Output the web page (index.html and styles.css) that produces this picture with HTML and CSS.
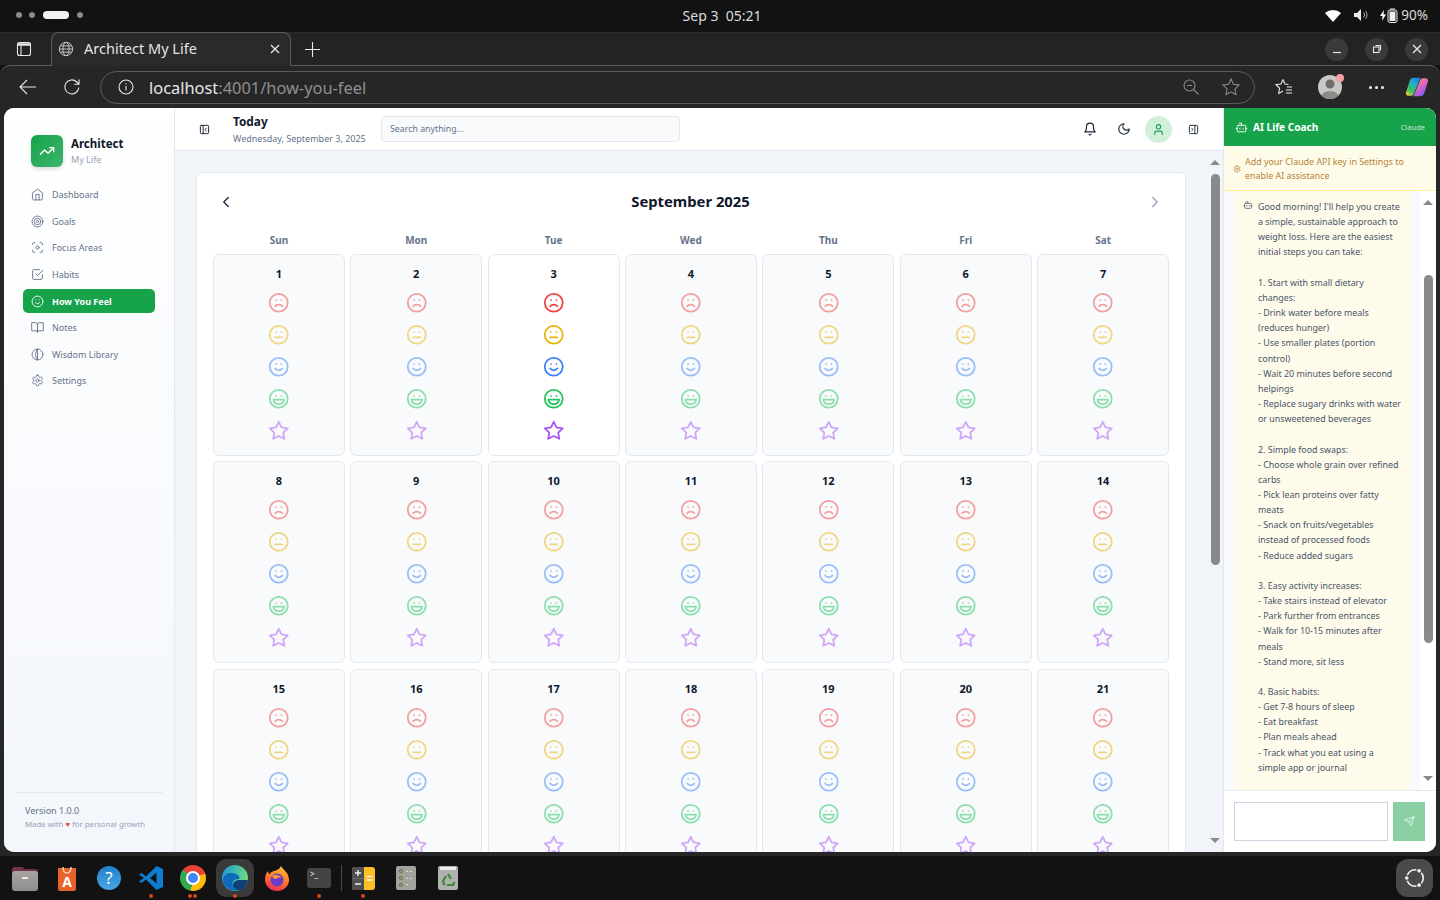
FILE: index.html
```html
<!DOCTYPE html>
<html lang="en">
<head>
  <meta charset="UTF-8" />
  <title>Architect My Life</title>
  <link rel="stylesheet" href="styles.css">
</head>
<body>

  <!-- icon sprite -->
  <svg class="sprite" xmlns="http://www.w3.org/2000/svg">
    <symbol id="i-home" viewBox="0 0 24 24"><path d="m3 9 9-7 9 7v11a2 2 0 0 1-2 2H5a2 2 0 0 1-2-2z"/><path d="M9 22V12h6v10"/></symbol>
    <symbol id="i-target" viewBox="0 0 24 24"><circle cx="12" cy="12" r="10"/><circle cx="12" cy="12" r="6"/><circle cx="12" cy="12" r="2"/></symbol>
    <symbol id="i-focus" viewBox="0 0 24 24"><circle cx="12" cy="12" r="3"/><path d="M3 7V5a2 2 0 0 1 2-2h2"/><path d="M17 3h2a2 2 0 0 1 2 2v2"/><path d="M21 17v2a2 2 0 0 1-2 2h-2"/><path d="M7 21H5a2 2 0 0 1-2-2v-2"/></symbol>
    <symbol id="i-check" viewBox="0 0 24 24"><path d="m9 11 3 3L22 4"/><path d="M21 12v7a2 2 0 0 1-2 2H5a2 2 0 0 1-2-2V5a2 2 0 0 1 2-2h11"/></symbol>
    <symbol id="i-book" viewBox="0 0 24 24"><path d="M2 3h6a4 4 0 0 1 4 4v14a3 3 0 0 0-3-3H2z"/><path d="M22 3h-6a4 4 0 0 0-4 4v14a3 3 0 0 1 3-3h7z"/></symbol>
    <symbol id="i-wisdom" viewBox="0 0 24 24"><circle cx="12" cy="12" r="10"/><path d="M12 2c-5 4-5 16 0 20"/><path d="M12 2v20"/></symbol>
    <symbol id="i-gear" viewBox="0 0 24 24"><path d="M12.22 2h-.44a2 2 0 0 0-2 2v.18a2 2 0 0 1-1 1.73l-.43.25a2 2 0 0 1-2 0l-.15-.08a2 2 0 0 0-2.73.73l-.22.38a2 2 0 0 0 .73 2.73l.15.1a2 2 0 0 1 1 1.72v.51a2 2 0 0 1-1 1.74l-.15.09a2 2 0 0 0-.73 2.73l.22.38a2 2 0 0 0 2.73.73l.15-.08a2 2 0 0 1 2 0l.43.25a2 2 0 0 1 1 1.73V20a2 2 0 0 0 2 2h.44a2 2 0 0 0 2-2v-.18a2 2 0 0 1 1-1.73l.43-.25a2 2 0 0 1 2 0l.15.08a2 2 0 0 0 2.73-.73l.22-.39a2 2 0 0 0-.73-2.73l-.15-.08a2 2 0 0 1-1-1.74v-.5a2 2 0 0 1 1-1.74l.15-.09a2 2 0 0 0 .73-2.73l-.22-.38a2 2 0 0 0-2.73-.73l-.15.08a2 2 0 0 1-2 0l-.43-.25a2 2 0 0 1-1-1.73V4a2 2 0 0 0-2-2z"/><circle cx="12" cy="12" r="3"/></symbol>
    <symbol id="i-trend" viewBox="0 0 24 24"><path d="M22 7l-8.500 8.500-5-5L2 17"/><path d="M16 7h6v6"/></symbol>
    <symbol id="i-bell" viewBox="0 0 24 24"><path d="M6 8a6 6 0 0 1 12 0c0 7 3 9 3 9H3s3-2 3-9"/><path d="M10.300 21a1.940 1.940 0 0 0 3.400 0"/></symbol>
    <symbol id="i-moon" viewBox="0 0 24 24"><path d="M12 3a6 6 0 0 0 9 9 9 9 0 1 1-9-9Z"/></symbol>
    <symbol id="i-user" viewBox="0 0 24 24"><path d="M19 21v-2a4 4 0 0 0-4-4H9a4 4 0 0 0-4 4v2"/><circle cx="12" cy="7" r="4"/></symbol>
    <symbol id="i-panel-l" viewBox="0 0 24 24"><rect x="3" y="3" width="18" height="18" rx="2"/><path d="M9 3v18"/><path d="m16 15-3-3 3-3"/></symbol>
    <symbol id="i-panel-r" viewBox="0 0 24 24"><rect x="3" y="3" width="18" height="18" rx="2"/><path d="M15 3v18"/><path d="m8 9 3 3-3 3"/></symbol>
    <symbol id="i-bot" viewBox="0 0 24 24"><path d="M12 8V4H8"/><rect x="4" y="8" width="16" height="12" rx="2"/><path d="M2 14h2"/><path d="M20 14h2"/><path d="M15 13v2"/><path d="M9 13v2"/></symbol>
    <symbol id="i-send" viewBox="0 0 24 24"><path d="m22 2-7 20-4-9-9-4Z"/><path d="M22 2 11 13"/></symbol>
    <symbol id="i-left" viewBox="0 0 24 24"><path d="m15 18-6-6 6-6"/></symbol>
    <symbol id="i-right" viewBox="0 0 24 24"><path d="m9 18 6-6-6-6"/></symbol>
    <symbol id="i-frown" viewBox="0 0 24 24"><circle cx="12" cy="12" r="10"/><path d="M16 16s-1.500-2-4-2-4 2-4 2"/><path d="M9 9h.01"/><path d="M15 9h.01"/></symbol>
    <symbol id="i-meh" viewBox="0 0 24 24"><circle cx="12" cy="12" r="10"/><path d="M8 15h8"/><path d="M9 9h.01"/><path d="M15 9h.01"/></symbol>
    <symbol id="i-smile" viewBox="0 0 24 24"><circle cx="12" cy="12" r="10"/><path d="M8 14s1.500 2 4 2 4-2 4-2"/><path d="M9 9h.01"/><path d="M15 9h.01"/></symbol>
    <symbol id="i-laugh" viewBox="0 0 24 24"><circle cx="12" cy="12" r="10"/><path d="M18 13a6 6 0 0 1-6 5 6 6 0 0 1-6-5h12Z"/><path d="M9 9h.01"/><path d="M15 9h.01"/></symbol>
    <symbol id="i-star" viewBox="0 0 24 24"><path d="M12 2l3.090 6.260L22 9.270l-5 4.870 1.180 6.880L12 17.770l-6.180 3.250L7 14.140 2 9.270l6.910-1.010L12 2z"/></symbol>
  </svg>

  <!-- Desktop top bar -->
  <div class="topbar">
    <div class="workspaces"><i></i><i></i><b></b><i></i></div>
    <div class="clock">Sep 3&nbsp;&nbsp;05:21</div>
    <div class="tray">
      <svg width="16" height="13" viewBox="0 0 16 13"><path d="M0 4a12 12 0 0 1 16 0L8 13z" fill="#fff"/></svg>
      <svg class="tray-sound" width="16" height="14" viewBox="0 0 16 14"><path d="M0 5h3l4-4v12l-4-4H0z" fill="#eee"/><path d="M9.500 4.500a3.500 3.500 0 0 1 0 5M11.500 3a6 6 0 0 1 0 8" fill="none" stroke="#aaa"/></svg>
      <svg class="tray-batt" width="20" height="15" viewBox="0 0 20 15"><path d="M4 2 0 8h2.500L2 13l4-6.500H3.500z" fill="#fff"/><rect x="8" y="2" width="9" height="12.500" rx="2" fill="none" stroke="#eee"/><rect x="9.500" y="3.500" width="6" height="9.500" fill="#eee"/><path d="M10 1h5" stroke="#eee"/></svg>
      <span>90%</span>
    </div>
  </div>

  <!-- Browser chrome -->
  <div class="tabstrip">
    <svg class="chrome-ico tabs-ico" width="16" height="16" viewBox="0 0 16 16"><rect x="1.500" y="1.500" width="13" height="13" rx="2"/><path d="M1.500 3.500h13" stroke-width="2.500"/><path d="M5 4.500v10"/></svg>
    <div class="tab">
      <svg class="chrome-ico globe" width="16" height="16" viewBox="0 0 18 18"><circle cx="9" cy="9" r="7.500"/><ellipse cx="9" cy="9" rx="3.500" ry="7.500"/><path d="M1.500 9h15M2.500 5.500h13M2.500 12.500h13"/></svg>
      <span class="tab-title">Architect My Life</span>
      <svg class="chrome-ico" width="10" height="10" viewBox="0 0 10 10"><path d="m1 1 8 8M9 1 1 9" stroke-width="1.300"/></svg>
    </div>
    <svg class="chrome-ico new-tab" width="15" height="15" viewBox="0 0 15 15"><path d="M7.500 0v15M0 7.500h15"/></svg>
    <div class="win-btns">
      <span><svg class="chrome-ico" width="10" height="10" viewBox="0 0 10 10"><path d="M1 8.500h8" stroke-width="1.200"/></svg></span>
      <span><svg class="chrome-ico" width="10" height="10" viewBox="0 0 10 10"><rect x="1.500" y="3" width="5.500" height="5.500"/><path d="M3.500 1.500h5v5"/></svg></span>
      <span><svg class="chrome-ico" width="10" height="10" viewBox="0 0 10 10"><path d="m1 1 8 8M9 1 1 9" stroke-width="1.300"/></svg></span>
    </div>
  </div>
  <div class="toolbar">
    <svg class="chrome-ico tool-back" width="18" height="16" viewBox="0 0 18 16"><path d="M17 8H1M8 1 1 8l7 7"/></svg>
    <svg class="chrome-ico tool-reload" width="18" height="18" viewBox="0 0 18 18"><path d="M15.800 9.500a7 7 0 1 1-2-5.500L16 6.200M16 1.500v4.700h-4.700"/></svg>
    <div class="address">
      <svg class="chrome-ico" width="16" height="16" viewBox="0 0 16 16"><circle cx="8" cy="8" r="7"/><path d="M8 7v4.500M8 4.300v1.200"/></svg>
      <span class="url"><em>localhost</em>:4001/how-you-feel</span>
      <svg class="chrome-ico dim zoom-out" width="16" height="16" viewBox="0 0 16 16"><circle cx="6.500" cy="6.500" r="5.500"/><path d="M4 6.500h5M10.500 10.500l5 5"/></svg>
      <svg class="chrome-ico dim" width="18" height="18" viewBox="0 0 18 18"><path d="m9 1 2.400 5.300 5.600.7-4.100 3.900 1.100 5.700L9 14l-5 2.600 1.100-5.700L1 7l5.600-.7z"/></svg>
    </div>
    <svg class="chrome-ico tool-fav" width="18" height="18" viewBox="0 0 18 18"><path d="M8 1.500 6 6l-5 .7 3.600 3.600-.9 5.200L8 13M8 1.500 10 6l3.500.5M12 9h5M11 12h6M11 15h6"/></svg>
    <div class="profile">
      <svg width="24" height="24" viewBox="0 0 24 24"><circle cx="12" cy="12" r="12" fill="#c9c7c4"/><circle cx="12" cy="9" r="4.500" fill="#6f6e6c"/><path d="M3.500 20.500a9 6.500 0 0 1 17 0 12 12 0 0 1-17 0z" fill="#8c8b89"/></svg>
      <i class="profile-dot"></i>
    </div>
    <div class="more"><i></i><i></i><i></i></div>
    <svg class="copilot" width="24" height="22" viewBox="0 0 24 24" preserveAspectRatio="none">
      <defs>
        <linearGradient id="cp1" x1="0.800" y1="0" x2="0.100" y2="1"><stop offset="0" stop-color="#1f7fe8"/><stop offset=".35" stop-color="#22b0c8"/><stop offset=".7" stop-color="#3fc05a"/><stop offset="1" stop-color="#f0cf3a"/></linearGradient>
        <linearGradient id="cp2" x1="0.900" y1="1" x2="0.200" y2="0"><stop offset="0" stop-color="#f2a65a"/><stop offset=".35" stop-color="#ee6fa0"/><stop offset=".75" stop-color="#a85ce8"/><stop offset="1" stop-color="#3a78f0"/></linearGradient>
      </defs>
      <path d="M8.500 2h7L9 19c-.5 1.500-1.500 2.500-3 2.500H3.500C1.500 21.500.5 20 1 18L4.500 6c.7-2.500 1.800-4 4-4z" fill="url(#cp1)"/>
      <path d="M8.500 2h7L9 19c-.5 1.500-1.500 2.500-3 2.500H3.500C1.500 21.500.5 20 1 18L4.500 6c.7-2.500 1.800-4 4-4z" fill="url(#cp2)" transform="rotate(180 12 12)"/>
    </svg>
  </div>

  <!-- App -->
  <div class="window-wrap">
    <div class="app">

      <aside class="sidebar">
        <div class="brand">
          <div class="brand-logo"><svg class="ico"><use href="#i-trend"/></svg></div>
          <div>
            <div class="brand-name">Architect</div>
            <div class="brand-sub">My Life</div>
          </div>
        </div>
        <nav class="nav">
          <a class="nav-item"><svg class="ico"><use href="#i-home"/></svg>Dashboard</a>
          <a class="nav-item"><svg class="ico"><use href="#i-target"/></svg>Goals</a>
          <a class="nav-item"><svg class="ico"><use href="#i-focus"/></svg>Focus Areas</a>
          <a class="nav-item"><svg class="ico"><use href="#i-check"/></svg>Habits</a>
          <a class="nav-item active"><svg class="ico"><use href="#i-smile"/></svg>How You Feel</a>
          <a class="nav-item"><svg class="ico"><use href="#i-book"/></svg>Notes</a>
          <a class="nav-item"><svg class="ico"><use href="#i-wisdom"/></svg>Wisdom Library</a>
          <a class="nav-item"><svg class="ico"><use href="#i-gear"/></svg>Settings</a>
        </nav>
        <div class="side-foot">
          <div class="version">Version 1.0.0</div>
          <div class="made">Made with <span class="heart">♥</span> for personal growth</div>
        </div>
      </aside>

      <div class="main">
        <header class="header">
          <svg class="ico head-toggle"><use href="#i-panel-l"/></svg>
          <div class="today">
            <div class="today-title">Today</div>
            <div class="today-date">Wednesday, September 3, 2025</div>
          </div>
          <div class="search">Search anything...</div>
          <div class="head-actions">
            <svg class="ico head-ico"><use href="#i-bell"/></svg>
            <svg class="ico head-ico moon-ico"><use href="#i-moon"/></svg>
            <div class="avatar"><svg class="ico head-ico"><use href="#i-user"/></svg></div>
            <svg class="ico head-ico panel-ico"><use href="#i-panel-r"/></svg>
          </div>
        </header>

        <div class="content">
          <div class="content-scroll">
            <section class="card">
              <div class="month-head">
                <svg class="ico chev"><use href="#i-left"/></svg>
                <h2>September 2025</h2>
                <svg class="ico chev chev-next"><use href="#i-right"/></svg>
              </div>
              <div class="weekdays">
                <div>Sun</div><div>Mon</div><div>Tue</div><div>Wed</div><div>Thu</div><div>Fri</div><div>Sat</div>
              </div>
              <div class="days">
                <div class="day"><span>1</span><svg class="f red"><use href="#i-frown"/></svg><svg class="f amber"><use href="#i-meh"/></svg><svg class="f blue"><use href="#i-smile"/></svg><svg class="f green"><use href="#i-laugh"/></svg><svg class="f purple"><use href="#i-star"/></svg></div>
                <div class="day"><span>2</span><svg class="f red"><use href="#i-frown"/></svg><svg class="f amber"><use href="#i-meh"/></svg><svg class="f blue"><use href="#i-smile"/></svg><svg class="f green"><use href="#i-laugh"/></svg><svg class="f purple"><use href="#i-star"/></svg></div>
                <div class="day is-today"><span>3</span><svg class="f red"><use href="#i-frown"/></svg><svg class="f amber"><use href="#i-meh"/></svg><svg class="f blue"><use href="#i-smile"/></svg><svg class="f green"><use href="#i-laugh"/></svg><svg class="f purple"><use href="#i-star"/></svg></div>
                <div class="day"><span>4</span><svg class="f red"><use href="#i-frown"/></svg><svg class="f amber"><use href="#i-meh"/></svg><svg class="f blue"><use href="#i-smile"/></svg><svg class="f green"><use href="#i-laugh"/></svg><svg class="f purple"><use href="#i-star"/></svg></div>
                <div class="day"><span>5</span><svg class="f red"><use href="#i-frown"/></svg><svg class="f amber"><use href="#i-meh"/></svg><svg class="f blue"><use href="#i-smile"/></svg><svg class="f green"><use href="#i-laugh"/></svg><svg class="f purple"><use href="#i-star"/></svg></div>
                <div class="day"><span>6</span><svg class="f red"><use href="#i-frown"/></svg><svg class="f amber"><use href="#i-meh"/></svg><svg class="f blue"><use href="#i-smile"/></svg><svg class="f green"><use href="#i-laugh"/></svg><svg class="f purple"><use href="#i-star"/></svg></div>
                <div class="day"><span>7</span><svg class="f red"><use href="#i-frown"/></svg><svg class="f amber"><use href="#i-meh"/></svg><svg class="f blue"><use href="#i-smile"/></svg><svg class="f green"><use href="#i-laugh"/></svg><svg class="f purple"><use href="#i-star"/></svg></div>
                <div class="day"><span>8</span><svg class="f red"><use href="#i-frown"/></svg><svg class="f amber"><use href="#i-meh"/></svg><svg class="f blue"><use href="#i-smile"/></svg><svg class="f green"><use href="#i-laugh"/></svg><svg class="f purple"><use href="#i-star"/></svg></div>
                <div class="day"><span>9</span><svg class="f red"><use href="#i-frown"/></svg><svg class="f amber"><use href="#i-meh"/></svg><svg class="f blue"><use href="#i-smile"/></svg><svg class="f green"><use href="#i-laugh"/></svg><svg class="f purple"><use href="#i-star"/></svg></div>
                <div class="day"><span>10</span><svg class="f red"><use href="#i-frown"/></svg><svg class="f amber"><use href="#i-meh"/></svg><svg class="f blue"><use href="#i-smile"/></svg><svg class="f green"><use href="#i-laugh"/></svg><svg class="f purple"><use href="#i-star"/></svg></div>
                <div class="day"><span>11</span><svg class="f red"><use href="#i-frown"/></svg><svg class="f amber"><use href="#i-meh"/></svg><svg class="f blue"><use href="#i-smile"/></svg><svg class="f green"><use href="#i-laugh"/></svg><svg class="f purple"><use href="#i-star"/></svg></div>
                <div class="day"><span>12</span><svg class="f red"><use href="#i-frown"/></svg><svg class="f amber"><use href="#i-meh"/></svg><svg class="f blue"><use href="#i-smile"/></svg><svg class="f green"><use href="#i-laugh"/></svg><svg class="f purple"><use href="#i-star"/></svg></div>
                <div class="day"><span>13</span><svg class="f red"><use href="#i-frown"/></svg><svg class="f amber"><use href="#i-meh"/></svg><svg class="f blue"><use href="#i-smile"/></svg><svg class="f green"><use href="#i-laugh"/></svg><svg class="f purple"><use href="#i-star"/></svg></div>
                <div class="day"><span>14</span><svg class="f red"><use href="#i-frown"/></svg><svg class="f amber"><use href="#i-meh"/></svg><svg class="f blue"><use href="#i-smile"/></svg><svg class="f green"><use href="#i-laugh"/></svg><svg class="f purple"><use href="#i-star"/></svg></div>
                <div class="day"><span>15</span><svg class="f red"><use href="#i-frown"/></svg><svg class="f amber"><use href="#i-meh"/></svg><svg class="f blue"><use href="#i-smile"/></svg><svg class="f green"><use href="#i-laugh"/></svg><svg class="f purple"><use href="#i-star"/></svg></div>
                <div class="day"><span>16</span><svg class="f red"><use href="#i-frown"/></svg><svg class="f amber"><use href="#i-meh"/></svg><svg class="f blue"><use href="#i-smile"/></svg><svg class="f green"><use href="#i-laugh"/></svg><svg class="f purple"><use href="#i-star"/></svg></div>
                <div class="day"><span>17</span><svg class="f red"><use href="#i-frown"/></svg><svg class="f amber"><use href="#i-meh"/></svg><svg class="f blue"><use href="#i-smile"/></svg><svg class="f green"><use href="#i-laugh"/></svg><svg class="f purple"><use href="#i-star"/></svg></div>
                <div class="day"><span>18</span><svg class="f red"><use href="#i-frown"/></svg><svg class="f amber"><use href="#i-meh"/></svg><svg class="f blue"><use href="#i-smile"/></svg><svg class="f green"><use href="#i-laugh"/></svg><svg class="f purple"><use href="#i-star"/></svg></div>
                <div class="day"><span>19</span><svg class="f red"><use href="#i-frown"/></svg><svg class="f amber"><use href="#i-meh"/></svg><svg class="f blue"><use href="#i-smile"/></svg><svg class="f green"><use href="#i-laugh"/></svg><svg class="f purple"><use href="#i-star"/></svg></div>
                <div class="day"><span>20</span><svg class="f red"><use href="#i-frown"/></svg><svg class="f amber"><use href="#i-meh"/></svg><svg class="f blue"><use href="#i-smile"/></svg><svg class="f green"><use href="#i-laugh"/></svg><svg class="f purple"><use href="#i-star"/></svg></div>
                <div class="day"><span>21</span><svg class="f red"><use href="#i-frown"/></svg><svg class="f amber"><use href="#i-meh"/></svg><svg class="f blue"><use href="#i-smile"/></svg><svg class="f green"><use href="#i-laugh"/></svg><svg class="f purple"><use href="#i-star"/></svg></div>
              </div>
            </section>
          </div>
          <div class="scrollbar scrollbar-main">
            <i class="arrow-up"></i>
            <div class="track"><b class="thumb"></b></div>
            <i class="arrow-down"></i>
          </div>
        </div>
      </div>

      <aside class="coach">
        <div class="coach-head">
          <svg class="ico coach-bot"><use href="#i-bot"/></svg>
          <span class="coach-title">AI Life Coach</span>
          <span class="coach-tag">Claude</span>
        </div>
        <div class="coach-warn">
          <svg class="ico warn-ico"><use href="#i-gear"/></svg>
          <span>Add your Claude API key in Settings to enable AI assistance</span>
        </div>
        <div class="coach-body">
          <div class="messages">
            <div class="bubble">
              <svg class="ico bubble-bot"><use href="#i-bot"/></svg>
              <p class="bubble-text">Good morning! I'll help you create
a simple, sustainable approach to
weight loss. Here are the easiest
initial steps you can take:

1. Start with small dietary
changes:
- Drink water before meals
(reduces hunger)
- Use smaller plates (portion
control)
- Wait 20 minutes before second
helpings
- Replace sugary drinks with water
or unsweetened beverages

2. Simple food swaps:
- Choose whole grain over refined
carbs
- Pick lean proteins over fatty
meats
- Snack on fruits/vegetables
instead of processed foods
- Reduce added sugars

3. Easy activity increases:
- Take stairs instead of elevator
- Park further from entrances
- Walk for 10-15 minutes after
meals
- Stand more, sit less

4. Basic habits:
- Get 7-8 hours of sleep
- Eat breakfast
- Plan meals ahead
- Track what you eat using a
simple app or journal</p>
            </div>
          </div>
          <div class="scrollbar scrollbar-chat">
            <i class="arrow-up"></i>
            <div class="track"><b class="thumb"></b></div>
            <i class="arrow-down"></i>
          </div>
        </div>
        <div class="coach-input">
          <div class="chat-box"></div>
          <div class="send"><svg class="ico"><use href="#i-send"/></svg></div>
        </div>
      </aside>
    </div>
  </div>

  <!-- Dock -->
  <div class="dock">
    <div class="dock-item">
      <svg width="26" height="25" viewBox="0 0 26 25"><defs><linearGradient id="fold" x1="0" y1="0" x2="0" y2="1"><stop offset="0" stop-color="#a8a2a0"/><stop offset="1" stop-color="#8e8e8e"/></linearGradient></defs><path d="M0 4a3 3 0 0 1 3-3h7l3 2h10a3 3 0 0 1 3 3v3H0z" fill="#77304a"/><rect y="5" width="26" height="20" rx="3" fill="url(#fold)"/><rect x="10" y="11" width="6" height="2" fill="#eee"/></svg>
    </div>
    <div class="dock-item">
      <svg width="20" height="25" viewBox="0 0 20 25"><path d="M1 2h18v21a2 2 0 0 1-2 2H3a2 2 0 0 1-2-2z" fill="#e8622a"/><path d="M6 1c0 4 1.500 6 4 6s4-2 4-6" fill="none" stroke="#f9d3b8" stroke-width="1.500"/><text x="10" y="21" class="dock-letter">A</text></svg>
    </div>
    <div class="dock-item">
      <svg width="24" height="24" viewBox="0 0 24 24"><defs><linearGradient id="help" x1="0" y1="0" x2="0" y2="1"><stop offset="0" stop-color="#1f7fc8"/><stop offset="1" stop-color="#4aa6e6"/></linearGradient></defs><circle cx="12" cy="12" r="12" fill="url(#help)"/><text x="12" y="18" class="dock-help">?</text></svg>
    </div>
    <div class="dock-item is-running">
      <svg width="24" height="24" viewBox="0 0 24 24"><path d="M17.500 0 24 3v18l-6.500 3L7 13.500 2.500 17 0 15.500 5 12 0 8.500 2.500 7 7 10.500z" fill="#0e7fd0"/><path d="M17.500 6.500 11 12l6.500 5.500z" fill="#121212"/></svg>
    </div>
    <div class="dock-item is-running-two">
      <div class="chrome-logo"><i></i></div>
    </div>
    <div class="dock-item dock-active is-running">
      <svg width="26" height="26" viewBox="0 0 26 26"><defs><linearGradient id="edge1" x1="0" y1="0.300" x2="1" y2="0.600"><stop offset="0" stop-color="#1f9fd8"/><stop offset="1" stop-color="#6fe07a"/></linearGradient></defs><circle cx="13" cy="13" r="13" fill="url(#edge1)"/><path d="M1 14C2 8 9 7 14 9c3 1.500 4 3 3 5-4 0-8 2-6 7 1 2 3 4 6 4.500C8 27 0 21 1 14z" fill="#0f6cbd"/><path d="M11 20c0-3 3-5 7-5h8c-1 5-4 9-8 10-4 0-7-2-7-5z" fill="#123f7c"/></svg>
    </div>
    <div class="dock-item">
      <svg width="24" height="25" viewBox="0 0 24 25"><defs><linearGradient id="fx" x1="0.700" y1="0" x2="0.300" y2="1"><stop offset="0" stop-color="#ffc02e"/><stop offset=".6" stop-color="#ff6a2e"/><stop offset="1" stop-color="#e8285c"/></linearGradient></defs><path d="M16 0c1 3 8 6 8 14a12 11 0 0 1-24 0C0 10 1 7 3 5c0 2 1 3 2 3 1-3 5-3 7-4 2-1 3-2 4-4z" fill="url(#fx)"/><circle cx="12" cy="14" r="6.500" fill="#6a3ac8"/><path d="M7 10c3-2 8-1 10 2-3-1-5 0-6 1-2 0-3-1-4-3z" fill="#ff9a2e"/></svg>
    </div>
    <div class="dock-item is-running">
      <div class="term">&gt;_</div>
    </div>
    <i class="dock-sep"></i>
    <div class="dock-item is-running calc-item">
      <svg width="23" height="23" viewBox="0 0 23 23"><rect width="23" height="23" rx="3" fill="#fbbf24"/><path d="M3 0h9v23H3a3 3 0 0 1-3-3V3a3 3 0 0 1 3-3z" fill="#4f4f4f"/><path d="M0 11.500h12" stroke="#6a6a6a"/><path d="M3 6h6M6 3v6M3 17h6M14.500 9.500h6M14.500 13h6" stroke="#f4f4f4" stroke-width="1.400"/></svg>
    </div>
    <div class="dock-item">
      <svg width="20" height="24" viewBox="0 0 20 24"><rect width="20" height="24" rx="2" fill="#a2a29c"/><g fill="none" stroke="#5c7a3c"><circle cx="5" cy="5" r="1.500"/><circle cx="5" cy="12" r="1.500"/><circle cx="5" cy="19" r="1.500"/></g><g fill="#dcdcd8"><rect x="10" y="5" width="2" height="1"/><rect x="14" y="5" width="2" height="1"/><rect x="10" y="12" width="2" height="1"/><rect x="14" y="12" width="2" height="1"/><rect x="10" y="18" width="2" height="1"/></g></svg>
    </div>
    <div class="dock-item">
      <svg width="20" height="24" viewBox="0 0 20 24"><rect width="20" height="24" rx="2" fill="#b0b0ac"/><rect x="2" y="1" width="16" height="3" fill="#eeeeec"/><path d="M10 8l3 5M6.500 19 5 15l3-5M9 19h6l1.500-3" fill="none" stroke="#3b8a3a" stroke-width="2.200"/></svg>
    </div>
    <div class="dock-apps">
      <svg width="22" height="22" viewBox="0 0 24 24"><g fill="none" stroke="#eee" stroke-width="1.800"><path d="M3.540 8.920A9 9 0 0 1 13.560 3.140"/><path d="M18.900 6.200a9 9 0 0 1 0 11.600"/><path d="M13.560 20.860A9 9 0 0 1 3.540 15.080"/></g><g fill="#eee"><circle cx="16.500" cy="4.200" r="2"/><circle cx="3" cy="12" r="2"/><circle cx="16.500" cy="19.800" r="2"/></g></svg>
    </div>
  </div>

</body>
</html>
```

FILE: styles.css
```css
:root {
  --green: #16a34a;
  --border: #e2e8f0;
  --muted: #64748b;
  --ink: #0f172a;
}

* {
  box-sizing: border-box;
}

body {
  margin: 0;
  width: 1440px;
  height: 900px;
  overflow: hidden;
  background: #121212;
  font-family: "Noto Sans", "Open Sans", sans-serif;
  color: var(--ink);
}

.sprite {
  position: absolute;
  width: 0;
  height: 0;
}

.ico {
  width: 14px;
  height: 14px;
  flex: none;
  fill: none;
  stroke: currentColor;
  stroke-width: 2;
  stroke-linecap: round;
  stroke-linejoin: round;
}

/* DESKTOP TOP BAR */
.topbar {
  height: 32px;
  display: grid;
  grid-template-columns: 1fr auto 1fr;
  align-items: center;
  background: #121212;
  padding: 0 12px 2px 16px;
}

.workspaces {
  display: flex;
  align-items: center;
  gap: 7px;
}

.workspaces i {
  width: 6px;
  height: 6px;
  border-radius: 50%;
  background: #8a8a8a;
}

.workspaces b {
  width: 26px;
  height: 8px;
  margin: 0 1px;
  border-radius: 4px;
  background: #f2f2f2;
}

.clock {
  font-size: 14px;
  color: #dcdcdc;
}

.tray {
  display: flex;
  justify-content: flex-end;
  align-items: center;
  font-size: 13.5px;
  color: #dcdcdc;
}

.tray-sound {
  margin-left: 13px;
}

.tray-batt {
  margin-left: 10px;
  margin-right: 1px;
}

/* BROWSER CHROME */
.tabstrip {
  height: 33px;
  display: flex;
  align-items: center;
  background: #232323;
  border-top: 1px solid #2c2c2c;
  padding-left: 16px;
}

.chrome-ico {
  flex: none;
  fill: none;
  stroke: #e8e8e8;
  stroke-width: 1.1;
}

.tabs-ico {
  margin-right: 19px;
}

.tab {
  position: relative;
  z-index: 1;
  width: 240px;
  height: 34px;
  margin-top: -1px;
  display: flex;
  align-items: center;
  gap: 10px;
  padding: 0 10px 0 6px;
  background: #2a2a2a;
  border: 1px solid #5a5a5a;
  border-bottom: none;
  border-radius: 8px 8px 0 0;
}

.globe {
  stroke: #c8c8c8;
}

.tab-title {
  flex: 1;
  margin-top: -2px;
  font-size: 14.5px;
  color: #e4e4e4;
}

.new-tab {
  margin-left: 14px;
}

.win-btns {
  margin-left: auto;
  display: flex;
  gap: 17px;
  padding-right: 12px;
}

.win-btns span {
  width: 23px;
  height: 23px;
  display: flex;
  align-items: center;
  justify-content: center;
  border-radius: 50%;
  background: #3a3a3a;
}

.toolbar {
  height: 43px;
  display: flex;
  align-items: center;
  background: #262626;
  border-top: 1px solid #5a5a5a;
  border-radius: 10px 10px 0 0;
  padding-left: 19px;
}

.tool-reload {
  margin-left: 26px;
}

.address {
  width: 1155px;
  height: 33px;
  margin-left: 19px;
  display: flex;
  align-items: center;
  padding: 0 14px 0 17px;
  border: 1px solid #5c5c5c;
  border-radius: 17px;
}

.url {
  flex: 1;
  margin-left: 15px;
  font-size: 16.4px;
  color: #8f8f8f;
}

.url em {
  font-style: normal;
  color: #e8e8e8;
}

.chrome-ico.dim {
  stroke: #8a8a8a;
}

.zoom-out {
  margin-right: 23px;
}

.tool-fav {
  margin-left: 20px;
}

.profile {
  position: relative;
  width: 24px;
  height: 24px;
  margin-left: 25px;
}

.profile-dot {
  position: absolute;
  top: -1px;
  right: -2px;
  width: 8px;
  height: 8px;
  border-radius: 50%;
  background: #f4a3a3;
}

.more {
  display: flex;
  gap: 3px;
  margin-left: 27px;
}

.more i {
  width: 3px;
  height: 3px;
  border-radius: 50%;
  background: #eee;
}

.copilot {
  margin-left: 21px;
}

/* APP WINDOW */
.window-wrap {
  height: 748px;
  padding: 0 4px 4px;
  background: #262626;
}

.app {
  height: 744px;
  display: flex;
  overflow: hidden;
  border-radius: 10px;
  background: #fff;
}

/* SIDEBAR */
.sidebar {
  width: 171px;
  flex: none;
  display: flex;
  flex-direction: column;
  background: linear-gradient(180deg, #fff, #f3f6fb);
  border-right: 1px solid var(--border);
}

.brand {
  display: flex;
  align-items: center;
  gap: 8px;
  padding: 27px 0 0 27px;
}

.brand-logo {
  width: 32px;
  height: 32px;
  display: flex;
  align-items: center;
  justify-content: center;
  border-radius: 6px;
  color: #fff;
  background: linear-gradient(135deg, #16a34a, #3eb56c);
  box-shadow: 0 2px 4px rgba(0, 0, 0, 0.15);
}

.brand-logo .ico {
  width: 16px;
  height: 16px;
}

.brand-name {
  padding-top: 1px;
  font-size: 11.5px;
  font-weight: 700;
  line-height: 16px;
}

.brand-sub {
  font-size: 9px;
  line-height: 15px;
  color: #94a3b8;
}

.nav {
  display: flex;
  flex-direction: column;
  gap: 2.6px;
  margin-top: 15.65px;
  padding: 0 19px;
}

.nav-item {
  height: 24px;
  display: flex;
  align-items: center;
  gap: 8px;
  padding-left: 8px;
  border-radius: 5px;
  font-size: 9px;
  color: #64748b;
}

.nav-item .ico {
  width: 13px;
  height: 13px;
  stroke-width: 1.7;
}

.nav-item.active {
  background: var(--green);
  color: #fff;
  font-weight: 700;
}

.side-foot {
  margin: auto 11px 0;
  padding: 10px 10px 22px;
  border-top: 1px solid var(--border);
}

.version {
  font-size: 9px;
  line-height: 15px;
  color: #64748b;
}

.made {
  font-size: 7.8px;
  line-height: 12px;
  color: #94a3b8;
}

.heart {
  color: #ef4444;
}

/* MAIN */
.main {
  flex: 1;
  min-width: 0;
  display: flex;
  flex-direction: column;
  background: #f1f5f9;
}

.header {
  height: 43px;
  flex: none;
  display: flex;
  align-items: center;
  background: #fff;
  border-bottom: 1px solid var(--border);
  padding-left: 24px;
}

.head-toggle {
  width: 11px;
  height: 11px;
}

.today {
  margin-left: 23px;
  width: 148px;
}

.today-title {
  font-size: 11.8px;
  font-weight: 700;
  line-height: 16px;
}

.today-date {
  margin-top: 3px;
  font-size: 9px;
  line-height: 14px;
  white-space: nowrap;
  color: #64748b;
}

.search {
  width: 299px;
  height: 26px;
  display: flex;
  align-items: center;
  padding: 0 0 1px 8px;
  background: #f8fafc;
  border: 1px solid var(--border);
  border-radius: 4px;
  font-size: 8.8px;
  color: #64748b;
}

.head-actions {
  margin-left: auto;
  display: flex;
  align-items: center;
  padding-right: 24px;
}

.head-ico {
  color: #1e293b;
}

.moon-ico {
  margin-left: 20px;
}

.avatar {
  width: 27px;
  height: 27px;
  margin-left: 14.5px;
  display: flex;
  align-items: center;
  justify-content: center;
  border-radius: 50%;
  background: #d1f0dc;
}

.avatar .head-ico {
  width: 13px;
  height: 13px;
  color: var(--green);
}

.panel-ico {
  width: 11px;
  height: 11px;
  margin-left: 16px;
}

.content {
  flex: 1;
  min-height: 0;
  display: flex;
}

.content-scroll {
  flex: 1;
  min-width: 0;
  overflow: hidden;
  padding: 21px 0 0 21px;
}

/* FAKE SCROLLBARS */
.scrollbar {
  width: 16px;
  flex: none;
  display: flex;
  flex-direction: column;
  align-items: center;
  justify-content: space-between;
  padding: 9px 0;
}

.arrow-up,
.arrow-down {
  width: 0;
  height: 0;
  border-left: 5px solid transparent;
  border-right: 5px solid transparent;
}

.arrow-up {
  border-bottom: 5px solid #8a8a8a;
}

.arrow-down {
  border-top: 5px solid #8a8a8a;
}

.track {
  flex: 1;
  width: 9px;
}

.thumb {
  display: block;
  width: 9px;
  border-radius: 5px;
  background: #8a8a8a;
}

.scrollbar-main .thumb {
  height: 391px;
  margin-top: 9px;
}

.scrollbar-chat {
  background: #fff;
}

.scrollbar-chat .thumb {
  height: 368px;
  margin-top: 70px;
}

/* CALENDAR */
.card {
  width: 990px;
  padding: 0 16px;
  background: #fff;
  border: 1px solid var(--border);
  border-radius: 6px;
}

.month-head {
  height: 57px;
  display: flex;
  align-items: center;
  justify-content: space-between;
  padding: 0 5px 0 4px;
}

.month-head h2 {
  margin: 0;
  padding-bottom: 2px;
  font-size: 14.8px;
  font-weight: 700;
}

.chev {
  width: 18px;
  height: 18px;
  color: #1e293b;
  stroke-width: 1.8;
}

.chev-next {
  color: #94a3b8;
}

.weekdays {
  display: grid;
  grid-template-columns: repeat(7, 1fr);
  column-gap: 5.6px;
  height: 24px;
  padding-bottom: 4px;
  align-items: center;
  text-align: center;
  font-size: 10px;
  font-weight: 700;
  color: var(--muted);
}

.days {
  display: grid;
  grid-template-columns: repeat(7, 1fr);
  gap: 5.4px 5.6px;
}

.day {
  height: 202px;
  display: flex;
  flex-direction: column;
  align-items: center;
  background: #f8fafc;
  border: 1px solid var(--border);
  border-radius: 6px;
  padding-top: 11px;
}

.day span {
  height: 16px;
  margin-bottom: 10px;
  font-size: 11px;
  font-weight: 700;
  line-height: 16px;
}

.day.is-today {
  background: #fff;
}

.f {
  width: 21.5px;
  height: 21.5px;
  flex: none;
  margin-bottom: 10.5px;
  fill: none;
  stroke: currentColor;
  stroke-width: 2;
  stroke-linecap: round;
  stroke-linejoin: round;
  opacity: 0.5;
}

.is-today .f {
  opacity: 1;
}

.red { color: #ef4444; }
.amber { color: #eab308; }
.blue { color: #3b82f6; }
.green { color: #22c55e; }
.purple { color: #a855f7; }

/* COACH PANEL */
.coach {
  width: 213px;
  flex: none;
  display: flex;
  flex-direction: column;
  background: #fff;
  border-left: 1px solid var(--border);
}

.coach-head {
  height: 38px;
  flex: none;
  display: flex;
  align-items: center;
  padding: 0 11px;
  background: var(--green);
  color: #fff;
}

.coach-bot {
  width: 13px;
  height: 13px;
  stroke-width: 1.7;
}

.coach-title {
  flex: 1;
  margin-left: 5px;
  font-size: 10.1px;
  font-weight: 700;
}

.coach-tag {
  font-size: 7.5px;
  opacity: 0.75;
}

.coach-warn {
  height: 45px;
  flex: none;
  display: flex;
  align-items: center;
  gap: 4px;
  padding: 1px 20px 0 9px;
  background: #fefce8;
  border-bottom: 1px solid #fef08a;
  font-size: 8.9px;
  line-height: 14px;
  color: #b5813a;
}

.warn-ico {
  width: 8px;
  height: 8px;
}

.coach-body {
  flex: 1;
  min-height: 0;
  display: flex;
  background: #f8fafc;
}

.messages {
  flex: 1;
  min-width: 0;
  overflow: hidden;
  padding-left: 10px;
}

.bubble {
  width: 176px;
  height: 100%;
  display: flex;
  gap: 5px;
  padding: 8px 0 0 9px;
  background: #fffbeb;
}

.bubble-bot {
  width: 10px;
  height: 10px;
  margin-top: 1px;
  color: #475569;
  stroke-width: 1.7;
}

.bubble-text {
  margin: 0;
  font-size: 8.9px;
  line-height: 15.16px;
  white-space: pre;
  color: #475569;
}

.coach-input {
  height: 62px;
  flex: none;
  display: flex;
  gap: 5px;
  padding: 11px 11px 11px 10px;
  border-top: 1px solid var(--border);
}

.chat-box {
  flex: 1;
  height: 39px;
  background: #fff;
  border: 1px solid #cbd5e1;
}

.send {
  width: 32px;
  height: 39px;
  display: flex;
  align-items: center;
  justify-content: center;
  background: #8bd0a3;
  color: #fff;
}

.send .ico {
  width: 11px;
  height: 11px;
  stroke-width: 1.5;
}

/* DOCK */
.dock {
  height: 44px;
  display: flex;
  align-items: center;
  padding-left: 4px;
}

.dock-item {
  position: relative;
  width: 38px;
  height: 38px;
  margin: 0 2px;
  display: flex;
  align-items: center;
  justify-content: center;
  border-radius: 10px;
}

.calc-item {
  margin-left: 1px;
  margin-right: 3px;
}

.is-running::after,
.is-running-two::after {
  content: "";
  position: absolute;
  left: 50%;
  bottom: -1px;
  width: 4px;
  height: 4px;
  margin-left: -2px;
  border-radius: 50%;
  background: #d9481c;
}

.is-running-two::after {
  margin-left: -5px;
  box-shadow: 5px 0 0 #d9481c;
}

.dock-active {
  background: #3a3a3a;
}

.dock-letter {
  font-size: 14px;
  font-weight: 700;
  fill: #fff;
  text-anchor: middle;
}

.dock-help {
  font-size: 17px;
  fill: #fff;
  text-anchor: middle;
}

.chrome-logo {
  width: 26px;
  height: 26px;
  display: flex;
  align-items: center;
  justify-content: center;
  border-radius: 50%;
  background: conic-gradient(from -50deg, #ea4335 0 120deg, #fbbc05 120deg 240deg, #34a853 240deg 360deg);
}

.chrome-logo i {
  width: 14px;
  height: 14px;
  border-radius: 50%;
  background: #4285f4;
  border: 2px solid #fff;
}

.term {
  width: 24px;
  height: 20px;
  padding: 1px 3px;
  border-radius: 3px;
  background: #444;
  font-size: 8px;
  line-height: 10px;
  color: #eee;
}

.dock-sep {
  width: 1px;
  height: 26px;
  margin: 0 1px;
  background: #4a4a4a;
}

.dock-apps {
  margin-left: auto;
  margin-right: 7px;
  width: 37px;
  height: 38px;
  display: flex;
  align-items: center;
  justify-content: center;
  border-radius: 12px;
  background: #4a4a4a;
}
```
